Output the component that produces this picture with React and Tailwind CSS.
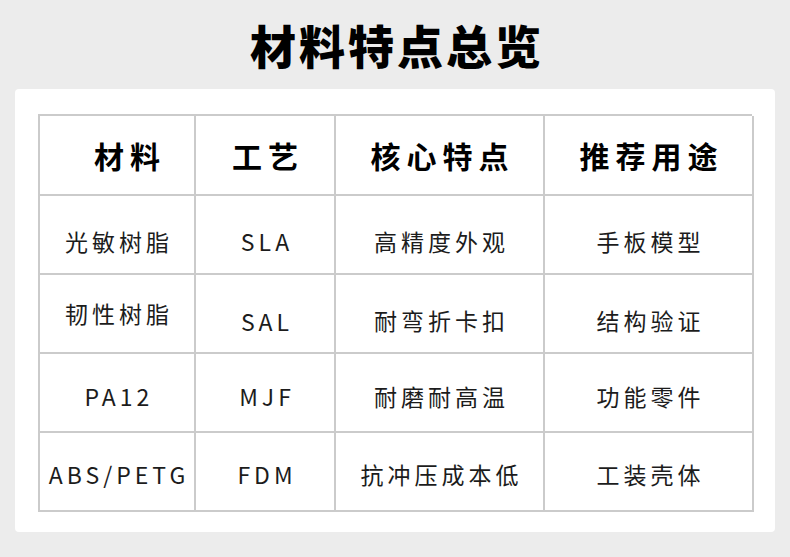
import React from 'react';

const font = { fontFamily: '"Noto Sans CJK SC", "Noto Sans", sans-serif' };

const headers = ['材料', '工艺', '核心特点', '推荐用途'];

// each cell: [text, extra class for small vertical nudge]
const rows = [
  [['光敏树脂', 'pt-[14px]'], ['SLA', 'pt-[14px]'], ['高精度外观', 'pt-[14px]'], ['手板模型', 'pt-[14px]']],
  [['韧性树脂', 'pt-0'], ['SAL', 'pt-[16px]'], ['耐弯折卡扣', 'pt-[14px]'], ['结构验证', 'pt-[14px]']],
  [['PA12', 'pt-[8px]'], ['MJF', 'pt-[8px]'], ['耐磨耐高温', 'pt-[8px]'], ['功能零件', 'pt-[8px]']],
  [['ABS/PETG', 'pt-[6px]'], ['FDM', 'pt-[6px]'], ['抗冲压成本低', 'pt-[6px]'], ['工装壳体', 'pt-[6px]']],
];

export default function App() {
  return (
    <div className="w-[790px] h-[557px] bg-[#ececec] overflow-hidden" style={font}>
      <h1 className="mt-[21px] mb-[22px] text-center text-[46px] leading-[46px] font-black tracking-[3px] text-black pl-[4px]">
        材料特点总览
      </h1>

      <div className="ml-[15px] w-[760px] h-[443px] bg-white rounded-[4px] pt-[25px] pl-[23px]">
        <div className="grid grid-cols-[156px_140px_209px_209px] w-[714px] border-l-2 border-t-2 border-[#cbcbcb]">
          {headers.map((h, i) => (
            <div
              key={h}
              className={`h-[80px] flex items-center justify-center border-r-2 border-b-2 border-[#cbcbcb] text-[30px] font-bold tracking-[6px] text-black ${i === 0 ? 'pl-[26px]' : 'pl-[6px]'}`}
            >
              {h}
            </div>
          ))}
          {rows.map((row, r) =>
            row.map(([text, nudge], c) => (
              <div
                key={r + '-' + c}
                className={`h-[79px] flex items-center justify-center border-r-2 border-b-2 border-[#cbcbcb] text-[23px] tracking-[4px] text-[#1c1c1c] pl-[4px] ${nudge}`}
              >
                {text}
              </div>
            ))
          )}
        </div>
      </div>
    </div>
  );
}
